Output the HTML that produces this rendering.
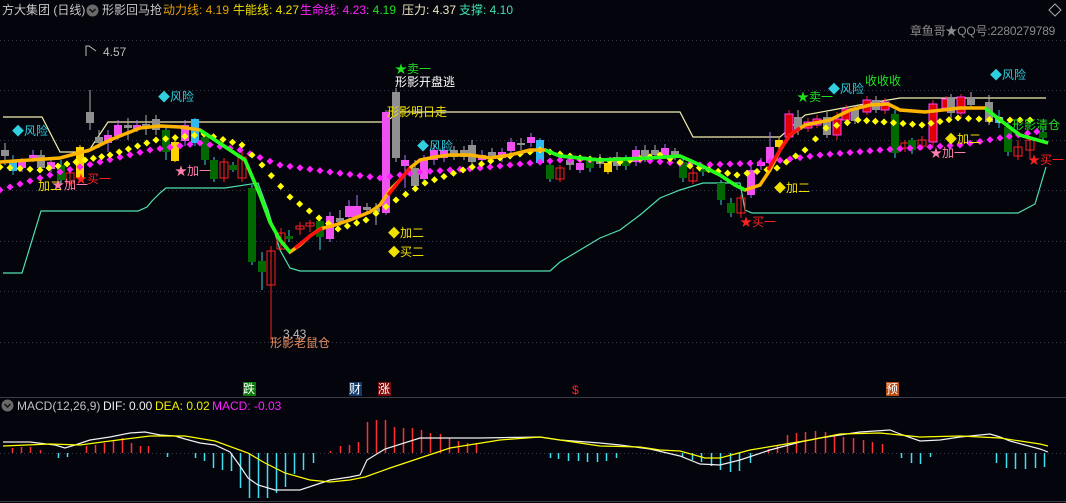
<!DOCTYPE html>
<html><head><meta charset="utf-8"><style>
html,body{margin:0;padding:0;background:#04040c;width:1066px;height:503px;overflow:hidden}
#w{position:relative;width:1066px;height:503px;font-family:"Liberation Sans","Noto Sans CJK SC",sans-serif}
svg{position:absolute;left:0;top:0}
.t{position:absolute;white-space:nowrap;font-size:12px;line-height:14px}
</style></head><body><div id="w">
<svg id="s" width="1066" height="503" xmlns="http://www.w3.org/2000/svg">
<g stroke="#3a3a4a" stroke-dasharray="1,3" stroke-width="1">
<line x1="0" y1="40.5" x2="1066" y2="40.5"/><line x1="0" y1="90.5" x2="1066" y2="90.5"/><line x1="0" y1="140.5" x2="1066" y2="140.5"/><line x1="0" y1="190.5" x2="1066" y2="190.5"/><line x1="0" y1="241.5" x2="1066" y2="241.5"/><line x1="0" y1="291.5" x2="1066" y2="291.5"/><line x1="0" y1="342.5" x2="1066" y2="342.5"/><line x1="0" y1="453.5" x2="1066" y2="453.5"/>
</g>
<line x1="0" y1="397.5" x2="1066" y2="397.5" stroke="#3c3c44"/>
<line x1="0" y1="501.5" x2="1066" y2="501.5" stroke="#3c3c44"/>
<polyline fill="none" stroke="#f4efb0" stroke-width="1.2" points="3,117 42,117 60,152 88,152 108,122 385,122 400,112 680,112 693,137 780,137 805,115 870,103 900,98 1046,98"/>
<polyline fill="none" stroke="#50e0b0" stroke-width="1.2" points="3,273 22,273 41,211 138,211 147,207 152,201 160,193 166,188 225,188 258,183 268,210 280,250 290,268 300,271 550,271 560,262 580,250 600,238 620,230 640,215 660,198 680,190 703,183 740,183 745,210 752,213 1018,213 1035,204 1046,167"/>
<g id="cand"></g>
<g id="dots"></g>
<polyline fill="none" stroke="#ffb400" stroke-width="3.5" points="0,162 30,160 60,158 90,150 110,140 140,128 160,126 180,127 200,130 215,140 230,150 245,160 260,195 270,222 280,240 290,252 300,245 310,236 320,229 335,225 350,220 370,212 380,205 390,190 400,180 410,168 420,160 435,157 450,155 470,155 490,158 510,155 530,150 545,150 560,156 600,160 650,158 680,156 700,165 720,175 735,185 745,190 760,185 770,170 780,150 790,135 805,125 830,120 850,110 870,105 888,104 900,110 925,112 960,108 985,108 1000,120 1020,135 1048,143"/>
<polyline fill="none" stroke="#20ff20" stroke-width="3.5" points="200,130 215,140 230,150 245,160 260,195 270,222 280,240 290,252"/>
<polyline fill="none" stroke="#ff1010" stroke-width="3.5" points="295,248 310,236 322,228"/>
<polyline fill="none" stroke="#ff1010" stroke-width="3.5" points="388,195 400,180 410,168"/>
<polyline fill="none" stroke="#20ff20" stroke-width="3.5" points="545,150 560,156 580,158 600,160 650,158 680,156 700,165 720,175 735,185 745,190"/>
<polyline fill="none" stroke="#ff1010" stroke-width="3.5" points="768,170 780,150 790,135 800,128"/>
<polyline fill="none" stroke="#20ff20" stroke-width="3.5" points="985,108 1000,120 1020,135 1048,143"/>
<g id="macd"></g>
<polyline fill="none" stroke="#f0f0f0" stroke-width="1.2" points="3,442 30,442 55,445 65,448 75,445 90,440 110,437 130,433 145,432 160,435 175,436 185,439 200,443 215,445 230,452 240,466 248,478 258,485 275,490 300,490 315,485 330,480 350,477 360,475 367,460 385,449 420,438 480,438 540,437 560,440 600,443 620,445 650,449 680,456 700,464 720,465 740,460 770,450 800,442 820,438 840,435 860,432 890,430 900,434 920,441 940,440 960,437 990,434 1000,437 1010,441 1040,449 1048,452"/>
<polyline fill="none" stroke="#ffff00" stroke-width="1.2" points="3,446 50,444 80,445 110,441 150,436 185,436 215,441 248,453 265,463 285,473 310,480 330,482 350,480 365,477 390,468 420,458 450,448 500,440 540,437 560,440 600,446 640,447 660,450 680,451 705,458 720,458 750,450 780,445 810,440 840,434 880,433 920,437 960,436 1000,438 1040,444 1048,446"/>
<circle cx="92.5" cy="10.5" r="6" fill="#6a6a6a"/><path d="M89.5 9 L92.5 12 L95.5 9" stroke="#111" stroke-width="1.5" fill="none"/>
<circle cx="7.5" cy="405.5" r="6" fill="#6a6a6a"/><path d="M4.5 404 L7.5 407 L10.5 404" stroke="#111" stroke-width="1.5" fill="none"/>
<path d="M1049 10 L1055 4 L1061 10 L1055 16 Z" stroke="#aaa" fill="none"/>
<path d="M86 56 L86 46 L89 46 L96 51" stroke="#bbb" fill="none"/>
<line x1="271" y1="285" x2="271" y2="340" stroke="#f02020"/>
<rect x="243" y="382" width="13" height="14" fill="#0a7a0a"/><rect x="349" y="382" width="13" height="14" fill="#123a6a"/><rect x="378" y="382" width="13" height="14" fill="#7a0a0a"/><rect x="886" y="382" width="13" height="14" fill="#b84a10"/>
</svg>
<div class="t" style="left:2px;top:3px;color:#c8c8c8">方大集团 (日线)</div>
<div class="t" style="left:102px;top:3px;color:#c8c8c8">形影回马抢</div>
<div class="t" style="left:163px;top:3px;color:#e8a000">动力线: 4.19</div>
<div class="t" style="left:233px;top:3px;color:#f0e000">牛能线: 4.27</div>
<div class="t" style="left:300px;top:3px;color:#ff20ff">生命线: 4.23</div>
<div class="t" style="left:366px;top:3px;color:#20e020">: 4.19</div>
<div class="t" style="left:402px;top:3px;color:#f0e8c0">压力: 4.37</div>
<div class="t" style="left:459px;top:3px;color:#40e0b0">支撑: 4.10</div>
<div class="t" style="left:910px;top:24px;color:#8a8a8a;letter-spacing:-0.2px">章鱼哥★QQ号:2280279789</div>
<div class="t" style="left:103px;top:45px;color:#bbb">4.57</div>
<div class="t" style="left:12px;top:124px;color:#30d0e0">◆风险</div>
<div class="t" style="left:158px;top:90px;color:#30d0e0">◆风险</div>
<div class="t" style="left:417px;top:139px;color:#30d0e0">◆风险</div>
<div class="t" style="left:828px;top:82px;color:#30d0e0">◆风险</div>
<div class="t" style="left:990px;top:68px;color:#30d0e0">◆风险</div>
<div class="t" style="left:395px;top:62px;color:#20e020">★卖一</div>
<div class="t" style="left:395px;top:75px;color:#fff">形影开盘逃</div>
<div class="t" style="left:387px;top:105px;color:#f0e000">形影明日走</div>
<div class="t" style="left:797px;top:90px;color:#20e020">★卖一</div>
<div class="t" style="left:865px;top:74px;color:#20e020">收收收</div>
<div class="t" style="left:1012px;top:118px;color:#20e020">形影清仓</div>
<div class="t" style="left:388px;top:226px;color:#f0e000">◆加二</div>
<div class="t" style="left:388px;top:245px;color:#f0e000">◆买二</div>
<div class="t" style="left:774px;top:181px;color:#f0e000">◆加二</div>
<div class="t" style="left:945px;top:132px;color:#f0e000">◆加二</div>
<div class="t" style="left:38px;top:179px;color:#f0e000">加二</div>
<div class="t" style="left:52px;top:178px;color:#ff80b0">★加一</div>
<div class="t" style="left:175px;top:164px;color:#ff80b0">★加一</div>
<div class="t" style="left:930px;top:146px;color:#ff80b0">★加一</div>
<div class="t" style="left:740px;top:215px;color:#ff2020">★买一</div>
<div class="t" style="left:1028px;top:153px;color:#ff2020">★买一</div>
<div class="t" style="left:75px;top:172px;color:#ff2020">★买一</div>
<div class="t" style="left:283px;top:327px;color:#bbb">3.43</div>
<div class="t" style="left:270px;top:336px;color:#e89060">形影老鼠仓</div>
<div class="t" style="left:243px;top:382px;color:#fff;font-size:12px">跌</div>
<div class="t" style="left:349px;top:382px;color:#fff;font-size:12px">财</div>
<div class="t" style="left:378px;top:382px;color:#fff;font-size:12px">涨</div>
<div class="t" style="left:572px;top:383px;color:#ff2020;font-size:12px">$</div>
<div class="t" style="left:886px;top:382px;color:#fff;font-size:12px">预</div>
<div class="t" style="left:17px;top:399px;color:#c0c0c0">MACD(12,26,9)</div>
<div class="t" style="left:103px;top:399px;color:#f0f0f0">DIF: 0.00</div>
<div class="t" style="left:155px;top:399px;color:#f0f000">DEA: 0.02</div>
<div class="t" style="left:212px;top:399px;color:#ff20ff">MACD: -0.03</div>
<script>
var NS="http://www.w3.org/2000/svg";
function el(p,n,a){var e=document.createElementNS(NS,n);for(var k in a)e.setAttribute(k,a[k]);p.appendChild(e);return e;}
var C={g:"#006a00",r:"none",R:"#e00000",p:"#f050f0",y:"#ffd000",c:"#30b8f0",k:"#909090"};
var W={g:"#40d0e0",r:"#ff2020",R:"#ff2020",p:"#b070ff",y:"#ffd000",c:"#30b8f0",k:"#b0b0b0"};
var d=[[5,150,156,'k',143,165],[13,160,171,'c',155,175],[22,162,168,'p',158,172],[33,155,158,'p',150,162],[41,155,168,'k',150,172],[51,162,169,'p',158,172],[61,165,180,'g',160,184],[70,173,183,'r',168,186],[80,147,178,'y',145,180],[90,112,123,'k',90,130],[99,137,143,'k',130,148],[108,135,143,'p',130,152],[118,125,136,'p',120,140],[128,125,128,'k',118,140],[137,125,129,'p',120,132],[146,124,127,'k',115,135],[156,119,130,'k',115,135],[166,130,152,'g',128,160],[175,142,161,'y',140,162],[185,125,141,'p',120,146],[195,119,143,'c',118,146],[205,137,160,'g',133,165],[214,160,179,'g',157,182],[224,162,178,'r',158,182],[233,165,170,'g',162,172],[242,157,178,'r',150,182],[252,188,262,'g',185,265],[262,261,272,'g',252,290],[271,251,285,'r',246,290],[281,233,249,'r',228,250],[289,236,239,'g',230,242],[300,226,229,'r',222,235],[310,223,226,'r',220,232],[320,221,237,'g',218,250],[330,216,239,'p',212,242],[340,218,222,'k',210,226],[349,206,217,'p',200,222],[357,206,217,'p',195,222],[367,207,210,'k',203,214],[376,208,212,'k',203,225],[386,112,213,'p',110,215],[396,92,158,'k',88,162],[405,160,166,'p',155,188],[415,168,186,'k',160,190],[424,160,179,'p',155,183],[434,150,160,'p',145,165],[444,150,158,'p',147,162],[454,150,157,'k',146,160],[464,150,157,'k',146,160],[472,145,162,'k',140,165],[482,155,160,'p',150,170],[492,152,156,'k',148,158],[502,152,158,'p',148,162],[511,142,151,'p',138,155],[521,143,145,'k',138,150],[531,137,143,'p',133,147],[540,140,163,'c',138,165],[550,165,179,'g',162,182],[560,168,179,'r',165,182],[570,160,165,'k',155,170],[580,163,170,'p',158,173],[590,160,168,'g',156,172],[600,158,164,'k',154,168],[608,163,172,'y',160,174],[617,157,166,'k',152,170],[626,158,166,'g',155,170],[636,150,162,'p',146,166],[645,150,158,'k',145,162],[655,150,155,'k',145,158],[665,148,155,'p',144,158],[675,151,156,'k',148,160],[683,162,178,'g',158,182],[693,173,181,'r',168,184],[703,170,172,'g',166,176],[721,183,200,'g',180,205],[731,203,213,'g',198,217],[741,198,213,'r',195,218],[751,170,195,'p',160,198],[761,162,166,'p',158,170],[770,147,163,'p',132,172],[779,140,147,'y',138,150],[789,114,137,'R',110,140],[798,117,130,'k',110,135],[808,122,128,'R',118,132],[817,119,125,'R',115,128],[827,117,135,'k',112,138],[837,119,135,'R',112,140],[846,109,120,'R',105,125],[855,109,121,'k',105,124],[867,100,112,'R',96,115],[876,100,110,'k',96,113],[885,102,110,'R',98,114],[895,114,153,'g',110,158],[905,143,148,'r',140,152],[912,140,150,'g',138,154],[922,140,146,'r',136,150],[933,104,142,'R',100,146],[946,99,108,'R',96,112],[951,97,113,'k',94,118],[961,97,113,'R',94,118],[971,97,105,'k',92,108],[989,102,122,'k',95,125],[999,117,123,'c',110,128],[1008,127,152,'g',122,156],[1018,147,156,'r',140,160],[1030,140,150,'r',136,158],[1043,132,138,'g',128,140]];
var g=document.getElementById("cand");
d.forEach(function(c){var t=c[3];el(g,"line",{x1:c[0],x2:c[0],y1:c[4],y2:c[5],stroke:W[t]});
el(g,"rect",{x:c[0]-4,y:c[1],width:8,height:Math.max(c[2]-c[1],2),fill:C[t],stroke:t=='R'?'#ff40ff':(t=='r'?'#ff2020':'none'),'stroke-width':1});});
function interp(pts,step,col){var o=document.getElementById("dots");for(var i=0;i<pts.length-1;i++){var a=pts[i],b=pts[i+1];var n=Math.max(1,Math.round((b[0]-a[0])/step));for(var j=0;j<n;j++){var f=j/n;var x=a[0]+(b[0]-a[0])*f,y=a[1]+(b[1]-a[1])*f;el(o,"rect",{x:x-2.5,y:y-2.5,width:5,height:5,fill:col,transform:"rotate(45 "+x+" "+y+")"});}}}
interp([[0,190],[60,172],[100,162],[150,150],[200,143],[240,150],[280,165],[330,172],[380,178],[420,172],[480,168],[560,160],[640,160],[700,165],[760,163],[820,155],[880,150],[960,145],[1000,138],[1046,130]],9.5,"#ff20ff");
interp([[0,167],[40,170],[85,160],[110,155],[156,140],[204,134],[242,145],[262,165],[290,197],[319,218],[338,229],[366,220],[396,200],[425,183],[463,170],[500,158],[540,150],[580,158],[620,162],[660,155],[690,166],[737,175],[777,168],[805,150],[826,128],[858,120],[884,122],[922,125],[958,118],[1000,120],[1040,120]],9.5,"#ffff00");
var m=document.getElementById("macd");
var h=[[12,448],[21,447],[30,447],[40,450],[58,458],[67,457],[86,446],[95,445],[104,443],[113,440],[122,438],[131,443],[140,446],[148,446],[167,457],[195,458],[204,461],[213,468],[222,470],[231,471],[240,488],[249,498],[258,498],[267,498],[276,493],[285,487],[294,474],[303,470],[313,463],[330,451],[340,446],[349,445],[358,442],[367,422],[376,420],[385,420],[394,427],[403,428],[412,428],[421,430],[430,433],[440,434],[449,438],[458,441],[467,443],[476,443],[550,458],[558,459],[568,461],[578,461],[587,462],[597,462],[606,461],[616,458],[682,457],[692,460],[701,462],[711,466],[720,470],[730,472],[739,471],[750,463],[768,449],[777,445],[787,435],[796,433],[805,432],[815,431],[825,432],[834,436],[843,437],[853,438],[863,440],[872,442],[882,444],[901,458],[911,463],[920,464],[930,457],[996,463],[1006,468],[1015,469],[1025,469],[1035,468],[1044,467]];
h.forEach(function(b){el(m,"line",{x1:b[0]+0.5,x2:b[0]+0.5,y1:453,y2:b[1],stroke:b[1]<453?"#ff3030":"#40e0f0","stroke-width":1.5});});
</script>
</div></body></html>
